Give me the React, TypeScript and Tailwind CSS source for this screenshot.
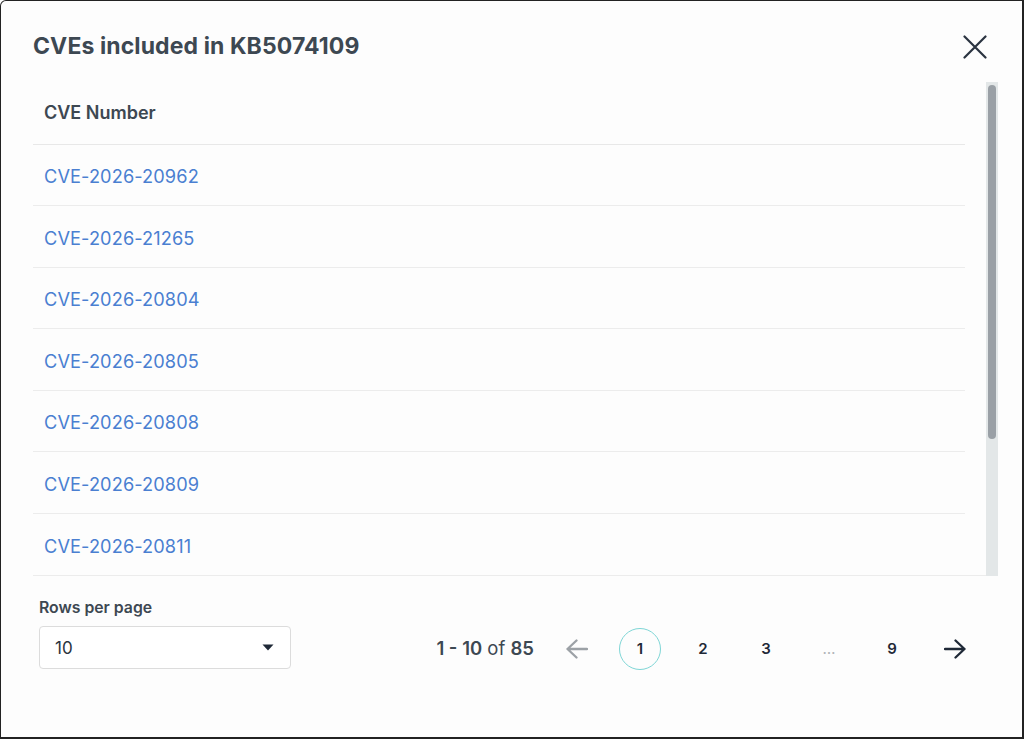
import React, { useState } from 'react';

const cves = [
    'CVE-2026-20962',
    'CVE-2026-21265',
    'CVE-2026-20804',
    'CVE-2026-20805',
    'CVE-2026-20808',
    'CVE-2026-20809',
    'CVE-2026-20811',
];

const CloseIcon = () => (
    <svg width="24" height="24" viewBox="0 0 24 24" fill="none" stroke="#2a3340" strokeWidth="2.2" strokeLinecap="round">
        <path d="M1.5 1.5l21 21M22.5 1.5l-21 21" />
    </svg>
);

const Arrow = ({ dir, color }: { dir: 'left' | 'right'; color: string }) => (
    <svg width="22" height="20" viewBox="0 0 22 20" fill="none" stroke={color} strokeWidth="2.3" strokeLinecap="round" strokeLinejoin="round">
        {dir === 'left' ? <path d="M21 10H1.5M10.5 1.5L1.5 10l9 8.5" /> : <path d="M1 10h19.5M11.5 1.5l9 8.5-9 8.5" />}
    </svg>
);

const App: React.FC = () => {
    const [page, setPage] = useState(1);

    return (
        <div
            className="w-[1024px] h-[739px] bg-[#fdfdfd] border-l border-t border-r-2 border-b-2 border-[#222] rounded-tl-[6px] flex flex-col overflow-hidden"
            style={{ fontFamily: 'Inter, "Noto Sans", sans-serif' }}
        >
            <div className="h-[81px] flex items-center justify-between pl-[32px] pr-[35px] pt-[10px]">
                <h2 className="text-[23px] font-bold text-[#3d4852] tracking-[0.1px]">CVEs included in KB5074109</h2>
                <button aria-label="Close" className="w-[24px] h-[24px] flex items-center justify-center">
                    <CloseIcon />
                </button>
            </div>

            <div className="flex h-[494px] border-b border-[#ececec] w-[965px] ml-[32px] pr-0">
                <div className="w-[932px] flex flex-col">
                    <div className="h-[63px] flex items-center px-[11px] border-b border-[#e8e8e8]">
                        <span className="text-[18px] font-semibold text-[#3d4852]">CVE Number</span>
                    </div>
                    {cves.map(c => (
                        <div key={c} className="h-[61.5px] shrink-0 flex items-center px-[11px] pt-[4px] border-b border-[#ececec] last:border-b-0">
                            <a href="#" className="text-[18.2px] text-[#4a7fd1] tracking-[0.1px]">{c}</a>
                        </div>
                    ))}
                </div>
                <div className="ml-[21px] w-[12px] bg-[#e3e7e8] pt-[3px] flex justify-center -mb-px">
                    <div className="w-[8px] h-[354px] bg-[#9aa0a6] rounded-full" />
                </div>
            </div>

            <div className="flex items-start justify-between pl-[38px] pr-[46px] pt-[20px]">
                <div className="flex flex-col">
                    <span className="text-[15.8px] font-semibold text-[#3d4852] mb-[6px]">Rows per page</span>
                    <div className="w-[252px] h-[43px] border border-[#dcdcdc] rounded-[4px] bg-white flex items-center justify-between pl-[15px] pr-[16px] pt-[3px]">
                        <span className="text-[17px] text-[#2a3340]">10</span>
                        <svg width="12" height="7" viewBox="0 0 12 7" className="-mt-[2px]"><path d="M0.5 0.5h11L6 6.5z" fill="#1f2937" /></svg>
                    </div>
                </div>
                <div className="flex items-center h-[42px] mt-[32px]">
                    <span className="text-[18.5px] text-[#3d4852] mr-[22px]">
                        <b className="font-semibold">1 - 10</b> of <b className="font-semibold">85</b>
                    </span>
                    <div className="flex items-center gap-[21px]">
                        <button className="w-[42px] h-[42px] flex items-center justify-center" aria-label="Previous">
                            <Arrow dir="left" color="#9ca1a6" />
                        </button>
                        {[1, 2, 3].map(n => (
                            <button
                                key={n}
                                onClick={() => setPage(n)}
                                className={`w-[42px] h-[42px] rounded-full flex items-center justify-center text-[15px] font-semibold text-[#1f2937] ${page === n ? 'border border-[#7fd6d6]' : ''}`}
                            >
                                {n}
                            </button>
                        ))}
                        <span className="w-[42px] h-[42px] flex items-center justify-center text-[15px] text-[#b0b4b8]">…</span>
                        <button className="w-[42px] h-[42px] flex items-center justify-center text-[15px] font-semibold text-[#1f2937]">9</button>
                        <button className="w-[42px] h-[42px] flex items-center justify-center" aria-label="Next">
                            <Arrow dir="right" color="#1f2937" />
                        </button>
                    </div>
                </div>
            </div>
        </div>
    );
};

export default App;
